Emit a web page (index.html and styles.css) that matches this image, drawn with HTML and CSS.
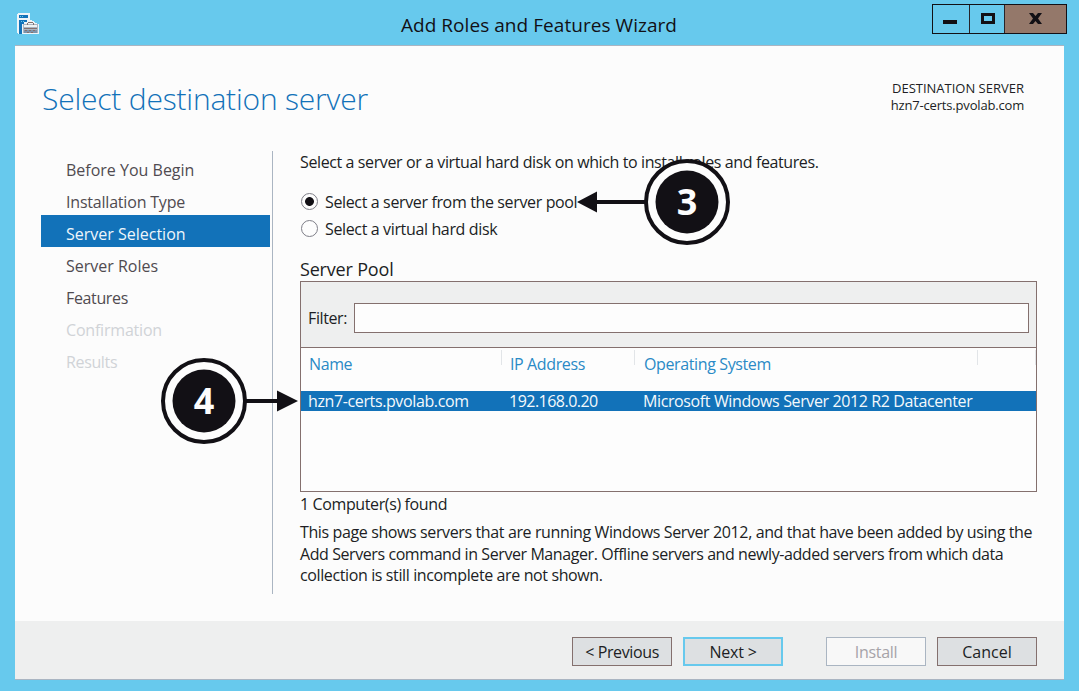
FILE: index.html
```html
<!DOCTYPE html>
<html lang="en">
<head>
<meta charset="utf-8">
<title>Add Roles and Features Wizard</title>
<link rel="stylesheet" href="styles.css">
</head>
<body>
<div class="window">
  <header class="titlebar">
    <svg class="app-icon" width="24" height="24" viewBox="0 0 24 24" shape-rendering="crispEdges">
      <path d="M1 0h11l1 1v6l3 1 5 3 1 1v9H1l-1-1V1z" fill="#eef4f8"/>
      <path d="M2 2h9v3H2zM2 7h8v2H7v2H5v10H2z" fill="#1272b9"/>
      <path d="M3 3h1v1H3zM5 3h1v1H5zM4 8h1v1H4zM6 8h1v1H6z" fill="#67c9ed"/>
      <path d="M6 11h15v9H6z" fill="#aab5c2"/>
      <path d="M11 9h5v1h1v2h-1v-2h-5v2h-1v-2h1z" fill="#85706c"/>
      <path d="M7 12h13v2H7z" fill="#f0f2f2"/>
      <path d="M7 15h13v1H7z" fill="#85706c"/>
      <path d="M7 17h13v3H7z" fill="#7c93ac"/>
      <path d="M8 17h2v1H8zM12 17h2v1h-2zM16 17h2v1h-2zM10 19h2v1h-2zM14 19h2v1h-2z" fill="#85706c"/>
    </svg>
    <h1 class="caption">Add Roles and Features Wizard</h1>
    <div class="controls">
      <span class="control"><svg width="36" height="28" viewBox="0 0 36 28"><path d="M10 15h14v4H10z" fill="#121015"/></svg></span>
      <span class="control control-max"><svg width="34" height="28" viewBox="0 0 34 28"><path d="M12.500 9.500h11v8h-11z" fill="none" stroke="#121015" stroke-width="3"/></svg></span>
      <span class="control control-close"><svg width="60" height="28" viewBox="0 0 60 28"><path d="M24 8h4l2.500 3L33 8h4l-4 5.500 4 5.500h-4l-2.500-3-2.500 3h-4l4-5.500z" fill="#121015"/></svg></span>
    </div>
  </header>
  <main class="page">
    <div class="page-head">
      <h2 class="page-title">Select destination server</h2>
      <div class="destination"><span>DESTINATION SERVER</span><span class="dest-name">hzn7-certs.pvolab.com</span></div>
    </div>
    <div class="columns">
      <nav class="steps">
        <a class="step">Before You Begin</a>
        <a class="step step-tight">Installation Type</a>
        <a class="step step-current">Server Selection</a>
        <a class="step">Server Roles</a>
        <a class="step step-tighter">Features</a>
        <a class="step step-tight step-disabled">Confirmation</a>
        <a class="step step-tighter step-disabled">Results</a>
      </nav>
      <section class="content">
        <p class="intro">Select a server or a virtual hard disk on which to install roles and features.</p>
        <label class="option"><i class="radio radio-on"></i><span>Select a server from the server pool</span></label>
        <label class="option"><i class="radio"></i><span>Select a virtual hard disk</span></label>
        <h3 class="pool-title">Server Pool</h3>
        <div class="pool">
          <div class="filter"><span class="filter-label">Filter:</span><div class="filter-input"></div></div>
          <div class="grid grid-head">
            <div class="cell">Name</div><div class="cell">IP Address</div><div class="cell cell-os">Operating System</div><div class="cell"></div>
          </div>
          <div class="grid grid-row">
            <div class="cell">hzn7-certs.pvolab.com</div><div class="cell cell-ip">192.168.0.20</div><div class="cell cell-os">Microsoft Windows Server 2012 R2 Datacenter</div>
          </div>
        </div>
        <p class="count">1 Computer(s) found</p>
        <p class="note">This page shows servers that are running Windows Server 2012, and that have been added by using the<br><span class="note-mid">Add Servers command in Server Manager. Offline servers and newly-added servers from which data</span><br>collection is still incomplete are not shown.</p>
      </section>
    </div>
  </main>
  <footer class="actions">
    <button class="btn btn-prev">&lt; Previous</button>
    <button class="btn btn-default">Next &gt;</button>
    <button class="btn btn-disabled">Install</button>
    <button class="btn">Cancel</button>
  </footer>
</div>
<svg class="callout callout-3" width="154" height="88" viewBox="0 0 154 88">
  <path d="M1 44l20-10.500v8.500h49v4H21v8.500z" fill="#121015"/>
  <circle cx="111" cy="44" r="41" fill="#fdfdfd" stroke="#121015" stroke-width="4"/>
  <circle cx="111" cy="44" r="31.500" fill="#121015"/>
  <text class="callout-number" x="111" y="57" text-anchor="middle">3</text>
</svg>
<svg class="callout callout-4" width="140" height="88" viewBox="0 0 140 88">
  <path d="M138 44l-21-10.500v8.500H84v4h33v8.500z" fill="#121015"/>
  <circle cx="44" cy="44" r="41" fill="#fdfdfd" stroke="#121015" stroke-width="4"/>
  <circle cx="44" cy="44" r="31.500" fill="#121015"/>
  <text class="callout-number" x="44" y="57" text-anchor="middle">4</text>
</svg>
</body>
</html>
```
FILE: styles.css
```css
* { box-sizing: border-box; }
body { margin: 0; width: 1079px; height: 691px; overflow: hidden; position: relative; background: #67c9ed; color: #201e24; font: 16px/22px "Open Sans", "Noto Sans", sans-serif; }
h1, h2, h3, p { margin: 0; font-weight: 400; }
span { white-space: nowrap; }

.window { height: 691px; padding: 0 15px 11px; display: flex; flex-direction: column; }

/* Title bar */
.titlebar { height: 46px; flex: none; display: flex; align-items: flex-start; border-bottom: 1px solid #aab5c2; }
.app-icon { margin: 13px 0 0 2px; }
.caption { flex: 1; text-align: center; font-size: 19px; line-height: 26px; letter-spacing: 0.05px; padding-top: 12px; margin-left: 72px; margin-right: -33px; color: #121015; }
.controls { display: flex; margin: 4px -3px 0 0; height: 30px; border: 1px solid #121015; }
.control { height: 28px; display: block; }
.control svg { display: block; }
.control-max { border-left: 1px solid #26242a; border-right: 1px solid #26242a; width: 36px; }
.control-close { background: #94786a; width: 61px; }

/* Page */
.page { height: 575px; flex: none; background: #fcfcfc; padding: 0 27px 0 26px; }
.page-head { height: 105px; display: flex; justify-content: space-between; padding: 32px 13px 0 1px; }
.page-title { font-size: 30px; font-weight: 300; line-height: 42px; letter-spacing: -0.2px; color: #1272b9; }
.destination { display: flex; flex-direction: column; align-items: flex-end; font-size: 13px; line-height: 17px; padding-top: 2px; }
.dest-name { letter-spacing: -0.18px; }
.columns { display: flex; }
.steps { width: 232px; height: 443px; border-right: 1px solid #aab5c2; padding-right: 2px; flex: none; }
.step { display: block; height: 32px; line-height: 38px; padding-left: 25px; color: #504b50; }
.step-tight { letter-spacing: -0.2px; }
.step-tighter { letter-spacing: -0.36px; }
.step-current { background: #1272b9; color: #eef6fb; }
.step-disabled { color: #d0d3d7; }

.content { flex: 1; min-width: 0; margin-left: 27px; letter-spacing: -0.38px; }
.intro { height: 37px; line-height: 22px; letter-spacing: -0.39px; }
.option { display: flex; height: 27px; align-items: center; gap: 7px; padding-left: 1px; letter-spacing: -0.36px; }
.radio { width: 17px; height: 17px; border: 1px solid #7f7f88; border-radius: 50%; background: #fdfdfd; }
.radio-on { background: radial-gradient(circle, #121015 4px, #fdfdfd 4.800px); }
.pool-title { height: 39px; font-size: 18px; letter-spacing: -0.18px; padding-top: 15px; line-height: 24px; }
.pool { height: 211px; border: 1px solid #84706e; background: #fdfdfd; }
.filter { height: 66px; display: flex; align-items: center; background: #eeefef; border-bottom: 1px solid #84706e; padding: 7px 7px 0; }
.filter-label { width: 46px; flex: none; }
.filter-input { flex: 1; height: 30px; border: 1px solid #84706e; background: #fdfdfd; margin-top: -1px; }
.grid { display: grid; grid-template-columns: 201px 133px 343px 58px; white-space: nowrap; }
.grid-head { color: #2a8ac6; height: 43px; padding-top: 2px; align-items: start; }
.grid-head .cell { height: 15px; line-height: 28px; padding-left: 8px; border-right: 1px solid #e2e5e8; }
.grid-row { height: 20px; line-height: 20px; background: #1272b9; color: #f4f9fc; }
.grid-row .cell { padding-left: 7px; }
.grid-row .cell-ip { letter-spacing: -0.52px; }
.grid-head .cell-os { padding-left: 9px; }
.grid-row .cell-os { padding-left: 8px; }
.count { padding-top: 1px; height: 30px; line-height: 22px; }
.note { line-height: 21.500px; }
.note-mid { letter-spacing: -0.42px; }

/* Footer */
.actions { height: 59px; flex: none; background: #eeefef; border-bottom: 1px solid #aab5c2; padding: 16px 27px 0; display: flex; justify-content: flex-end; gap: 11px; }
.btn { width: 100px; height: 29px; border: 1px solid #84706e; background: #dde0e2; padding: 2px 0 0; font: inherit; line-height: 25px; color: #201e24; }
.btn-prev { letter-spacing: -0.38px; }
.btn-default { border: 2px solid #67c9ed; line-height: 23px; margin-right: 32px; letter-spacing: -0.2px; }
.btn-disabled { background: #f8f8f8; border-color: #aab5c2; color: #a6a3a8; letter-spacing: -0.3px; }

/* Numbered callouts */
.callout { position: absolute; }
.callout-3 { left: 576px; top: 158px; }
.callout-4 { left: 160px; top: 357px; }
.callout-number { font: 700 36px "Open Sans", sans-serif; fill: #fdfdfd; }
```
